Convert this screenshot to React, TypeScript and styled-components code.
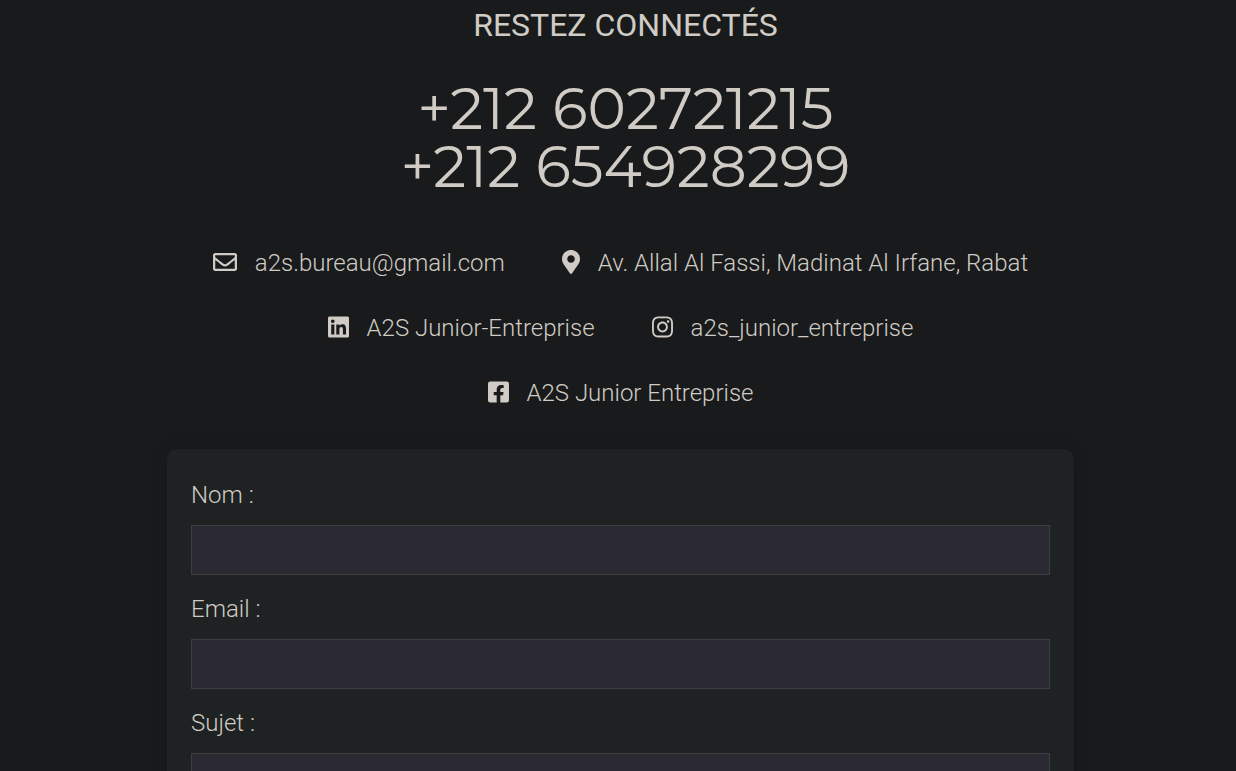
import React from "react";
import styled, { createGlobalStyle } from "styled-components";
import { FaRegEnvelope, FaMapMarkerAlt, FaLinkedin, FaInstagram, FaFacebookSquare } from "react-icons/fa";

const GlobalStyle = createGlobalStyle`
  *, *::before, *::after { box-sizing: border-box; }
  html { overflow: hidden; }
  body {
    margin: 0;
    background: #181a1b;
    color: #d0cbc4;
    font-family: Roboto, "Liberation Sans", sans-serif;
    font-size: 24px;
    font-weight: 300;
    line-height: 36px;
  }
`;

const Page = styled.main`
  height: 100vh;
  overflow: hidden;
  padding: 0 162px 0 167px;
`;

const Title = styled.h2`
  margin: 0 0 30px;
  padding: 6px 0 0 10px;
  font-size: 32px;
  font-weight: 400;
  line-height: 38px;
  text-align: center;
  text-transform: uppercase;
`;

const Phones = styled.p`
  margin: 0;
  padding: 6px 0 0 10px;
  font-family: Montserrat, Lato, sans-serif;
  font-size: 58px;
  font-weight: 400;
  line-height: 58px;
  text-align: center;
`;

const Phone = styled.span`
  display: block;
`;

const Contacts = styled.ul`
  display: flex;
  flex-wrap: wrap;
  justify-content: center;
  gap: 29px 57px;
  margin: 49px 0 38px;
  padding: 0;
  list-style: none;
`;

const Contact = styled.a<{ $iconWidth: number }>`
  display: flex;
  align-items: center;
  gap: 18px;
  color: inherit;
  text-decoration: none;

  svg {
    width: ${(p) => p.$iconWidth}px;
    height: 24px;
    margin-bottom: 2px;
  }
`;

const Form = styled.form`
  padding: 28px 24px;
  border-radius: 10px;
  background: #1e2222;
  box-shadow: 0 0 20px rgba(0, 0, 0, 0.1);
`;

const Label = styled.label`
  display: block;
  margin-bottom: 16px;
`;

const Input = styled.input`
  display: block;
  width: 100%;
  height: 50px;
  margin-top: 12px;
  border: 1px solid #3c3f41;
  background: #2b2a33;
  color: inherit;
  font: inherit;
`;

const contacts = [
  { href: "mailto:a2s.bureau@gmail.com", Icon: FaRegEnvelope, width: 24, text: "a2s.bureau@gmail.com" },
  { href: "#adresse", Icon: FaMapMarkerAlt, width: 18, text: "Av. Allal Al Fassi, Madinat Al Irfane, Rabat" },
  { href: "#linkedin", Icon: FaLinkedin, width: 21, text: "A2S Junior-Entreprise" },
  { href: "#instagram", Icon: FaInstagram, width: 21, text: "a2s_junior_entreprise" },
  { href: "#facebook", Icon: FaFacebookSquare, width: 21, text: "A2S Junior Entreprise" },
];

export default function App() {
  return (
    <>
      <GlobalStyle />
      <Page>
        <Title>Restez connectés</Title>
        <Phones>
          <Phone>+212 602721215</Phone>
          <Phone>+212 654928299</Phone>
        </Phones>
        <Contacts>
          {contacts.map(({ href, Icon, width, text }) => (
            <li key={href}>
              <Contact href={href} $iconWidth={width}>
                <Icon aria-hidden="true" />
                {text}
              </Contact>
            </li>
          ))}
        </Contacts>
        <Form>
          <Label>Nom :<Input type="text" name="nom" /></Label>
          <Label>Email :<Input type="email" name="email" /></Label>
          <Label>Sujet :<Input type="text" name="sujet" /></Label>
        </Form>
      </Page>
    </>
  );
}
